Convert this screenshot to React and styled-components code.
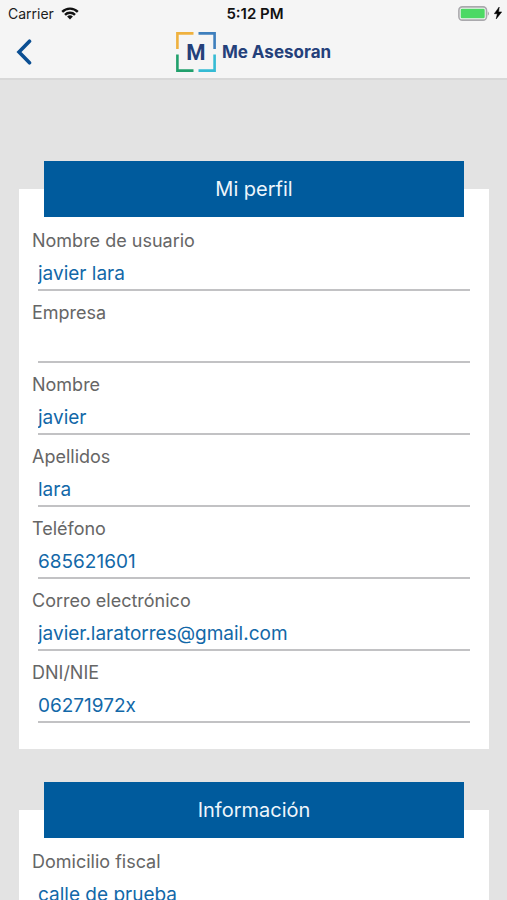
import React from "react";
import styled, { createGlobalStyle } from "styled-components";

const GlobalStyle = createGlobalStyle`
  *, *::before, *::after { box-sizing: border-box; }
  body {
    margin: 0;
    background: #e3e3e3;
    font-family: Inter, "Liberation Sans", sans-serif;
  }
`;

const Screen = styled.div`
  display: flex;
  flex-direction: column;
  height: 100vh;
`;

const Header = styled.header`
  flex: none;
  background: #f5f5f5;
  border-bottom: 2px solid #d8d8d8;
`;

const StatusBar = styled.div`
  display: grid;
  grid-template-columns: 1fr auto 1fr;
  align-items: center;
  height: 26px;
  padding: 0 5px 0 8px;
  font-size: 14px;
  color: #1c1c1c;
`;

const Carrier = styled.div`
  display: flex;
  align-items: center;
  gap: 7px;
`;

const Clock = styled.time`
  font-size: 15px;
  font-weight: 600;
  color: #111;
`;

const Power = styled.div`
  display: flex;
  align-items: center;
  justify-content: flex-end;
  gap: 4px;
`;

const NavBar = styled.nav`
  display: grid;
  grid-template-columns: 1fr auto 1fr;
  align-items: center;
  height: 52px;
  padding: 0 12px;
`;

const BackButton = styled.button`
  display: flex;
  justify-self: start;
  padding: 0 4px;
  border: 0;
  background: none;
  color: #0b4f93;
  cursor: pointer;
`;

const Brand = styled.a`
  display: flex;
  align-items: center;
  gap: 6px;
  color: #24407a;
  text-decoration: none;
`;

const BrandName = styled.span`
  font-size: 17px;
  font-weight: 700;
  white-space: nowrap;
`;

const Content = styled.main`
  flex: 1;
  display: flex;
  flex-direction: column;
  gap: 61px;
  min-height: 0;
  overflow-y: auto;
  scrollbar-width: none;
  padding: 109px 18px 32px 19px;
`;

const Card = styled.section`
  flex: none;
  padding-bottom: 26px;
  background: #fff;
`;

const CardTitle = styled.h2`
  margin: -28px 25px 12px;
  background: #005b9d;
  color: #eef6fc;
  font-size: 20px;
  font-weight: 400;
  line-height: 56px;
  text-align: center;
`;

const Fields = styled.div`
  display: grid;
  gap: 10px;
  padding: 0 19px 0 13px;
`;

const Field = styled.div`
  display: grid;
  gap: 4px;
`;

const Label = styled.label`
  color: #666;
  font-size: 18px;
  line-height: 24px;
`;

const Input = styled.input`
  height: 34px;
  min-width: 0;
  margin-left: 6px;
  padding: 0;
  border: 0;
  border-bottom: 2px solid #c2c2c4;
  border-radius: 0;
  outline: 0;
  background: transparent;
  color: #1268a8;
  font-family: inherit;
  font-size: 19px;
`;

const WifiIcon = () => (
  <svg width="18" height="13" viewBox="0 0 18 13" aria-hidden="true">
    <g fill="none" stroke="#111" strokeWidth="2.4">
      <path d="M1.2 4.9A11 11 0 0 1 16.8 4.9" />
      <path d="M4 7.8A7 7 0 0 1 14 7.8" />
    </g>
    <path d="M9 12.5L6.1 9.6A4.1 4.1 0 0 1 11.9 9.6Z" fill="#111" />
  </svg>
);

const BatteryIcon = () => (
  <svg width="32" height="15" viewBox="0 0 32 15" aria-hidden="true">
    <rect x="0.9" y="0.9" width="27.6" height="13.2" rx="3.4" fill="#f5f5f5" stroke="#aaa9ad" strokeWidth="1.6" />
    <rect x="2.7" y="2.8" width="24" height="9.4" rx="1.2" fill="#4cd964" />
    <path d="M29.8 5.2Q32 7.5 29.8 9.8Z" fill="#9b9b9f" />
  </svg>
);

const BoltIcon = () => (
  <svg width="8" height="12" viewBox="0 0 8 12" aria-hidden="true">
    <path d="M5.2 0L0.3 6.7H3.3L2.2 12L7.7 4.9H4.6Z" fill="#000" stroke="#000" strokeWidth="0.5" />
  </svg>
);

const BackIcon = () => (
  <svg width="16" height="26" viewBox="0 0 16 26" aria-hidden="true">
    <path d="M13.5 2.2L3 13L13.5 23.8" fill="none" stroke="currentColor" strokeWidth="3.6" strokeLinecap="round" />
  </svg>
);

const BrandMark = () => (
  <svg width="40" height="40" viewBox="0 0 40 40" aria-hidden="true">
    <g fill="none" strokeWidth="2.6">
      <path d="M1.4 17V1.4H17.5" stroke="#efb13e" />
      <path d="M22.5 1.4H38.6V17" stroke="#3e7fbd" />
      <path d="M1.4 22.5V38.6H17.5" stroke="#21a06c" />
      <path d="M22.5 38.6H38.6V22.5" stroke="#35bbd4" />
    </g>
    <text x="20" y="28" textAnchor="middle" fontFamily="Roboto, sans-serif" fontSize="22" fontWeight="700" fill="#24407a">
      M
    </text>
  </svg>
);

const sections = [
  {
    title: "Mi perfil",
    fields: [
      { id: "usuario", label: "Nombre de usuario", value: "javier lara" },
      { id: "empresa", label: "Empresa", value: "" },
      { id: "nombre", label: "Nombre", value: "javier" },
      { id: "apellidos", label: "Apellidos", value: "lara" },
      { id: "telefono", label: "Teléfono", value: "685621601", type: "tel" },
      { id: "correo", label: "Correo electrónico", value: "javier.laratorres@gmail.com", type: "email" },
      { id: "dni", label: "DNI/NIE", value: "06271972x" },
    ],
  },
  {
    title: "Información",
    fields: [{ id: "domicilio", label: "Domicilio fiscal", value: "calle de prueba" }],
  },
];

export default function App() {
  return (
    <Screen>
      <GlobalStyle />
      <Header>
        <StatusBar>
          <Carrier>
            Carrier
            <WifiIcon />
          </Carrier>
          <Clock>5:12 PM</Clock>
          <Power>
            <BatteryIcon />
            <BoltIcon />
          </Power>
        </StatusBar>
        <NavBar>
          <BackButton type="button" aria-label="Volver">
            <BackIcon />
          </BackButton>
          <Brand href="#inicio">
            <BrandMark />
            <BrandName>Me Asesoran</BrandName>
          </Brand>
        </NavBar>
      </Header>
      <Content>
        {sections.map((section) => (
          <Card key={section.title}>
            <CardTitle>{section.title}</CardTitle>
            <Fields>
              {section.fields.map((field) => (
                <Field key={field.id}>
                  <Label htmlFor={field.id}>{field.label}</Label>
                  <Input id={field.id} type={field.type || "text"} defaultValue={field.value} />
                </Field>
              ))}
            </Fields>
          </Card>
        ))}
      </Content>
    </Screen>
  );
}
